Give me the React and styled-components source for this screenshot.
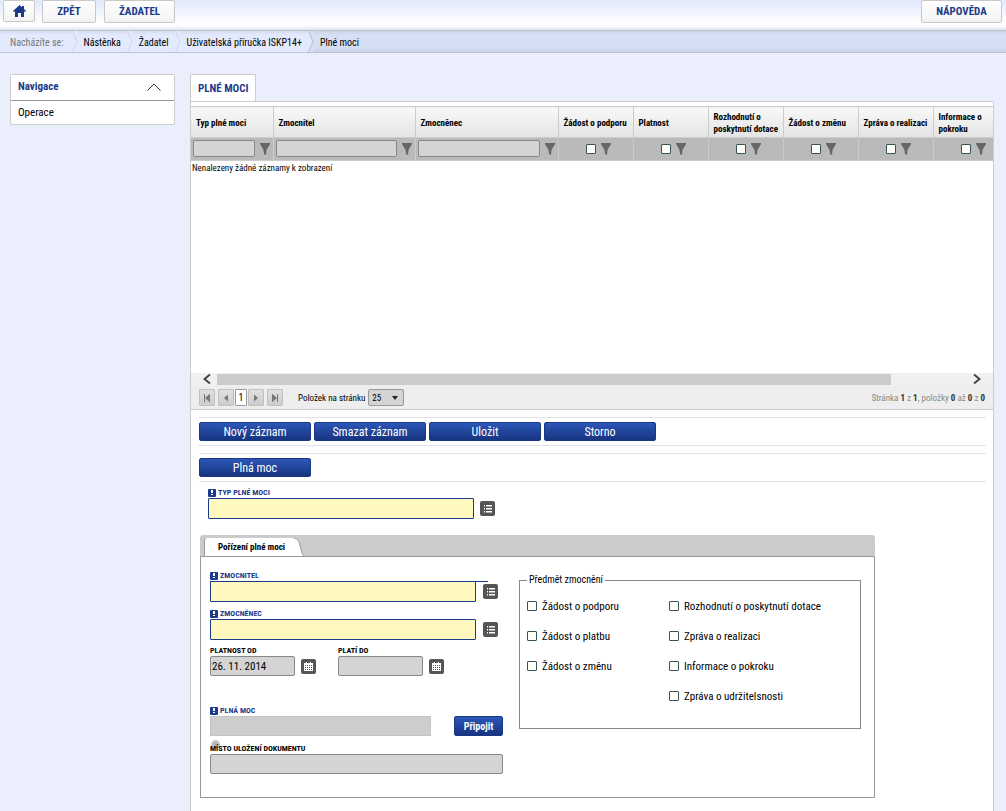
/*
  App.jsx: Plné moci page -- top bar, breadcrumbs, side menu, records grid and detail form
*/

import React, { useState } from 'react'
import styled, { createGlobalStyle } from 'styled-components';

const GlobalStyle = createGlobalStyle`
  *{
    box-sizing: border-box;
  }

  body{
    margin: 0;
    background: #ebeffd;
    color: #000;
    font-family: "Roboto Condensed", "Liberation Sans Narrow", Roboto, sans-serif;
    font-size: 10px;
  }

  button, input, select{
    font-family: inherit;
    margin: 0;
  }

  a{
    color: inherit;
    text-decoration: none;
  }
`;

const Page = styled.div`
  min-height: 100vh;
  display: flex;
  flex-direction: column;
`;

const TopBar = styled.header`
  display: flex;
  align-items: flex-start;
  height: 31px;
  padding: 0 4px 0 3px;
  background: linear-gradient(#e2e9fd, #fff 80%, #f6f8fc 90%, #dde2ec);
  border-bottom: 1px solid #bfc4c8;
`;

const TopButton = styled.button`
  display: flex;
  align-items: center;
  justify-content: center;
  width: ${props => props.$width}px;
  height: ${props => props.$small ? 22 : 23}px;
  margin-right: ${props => props.$gap || 0}px;
  margin-left: ${props => props.$right ? "auto" : "0"};
  padding: 0;
  background: linear-gradient(#fff, #f3f3f3);
  border: 1px solid #c8c8c8;
  border-radius: 2px;
  color: #1b3a8a;
  font-size: 11px;
  font-weight: bold;
`;

const Crumbs = styled.nav`
  display: flex;
  height: 22px;
  background: linear-gradient(#ccd4e8, #d7dff4 4px, #d7dff4 16px, #c9d2e8);
  border-bottom: 1px solid #b9c3db;
  line-height: 23px;
`;

const Crumb = styled.span`
  padding: 0 ${props => props.$first ? 8 : 6}px 0 ${props => props.$first ? 10 : 6}px;
  background: ${props => props.$last ? "transparent" : "linear-gradient(#d3dbee, #e3eafd 4px)"};
  color: ${props => props.$first ? "#777" : "#000"};
`;

const Body = styled.div`
  flex: 1;
  display: flex;
  gap: 15px;
  padding: 21px 12px 0 10px;
`;

const SideMenu = styled.aside`
  flex: none;
  align-self: flex-start;
  width: 165px;
  background: #fff;
  border: 1px solid #ccc;
  border-radius: 2px;
  font-size: 11px;
`;

const SideTitle = styled.button`
  display: flex;
  align-items: center;
  justify-content: space-between;
  width: 100%;
  height: 26px;
  padding: 0 13px 2px 7px;
  background: #fff;
  border: 0;
  border-bottom: 1px solid #999;
  color: #1b3a8a;
  font-size: 11px;
  font-weight: bold;
`;

const SideLink = styled.a`
  display: block;
  padding: 0 7px;
  line-height: 23px;
`;

const Main = styled.main`
  flex: 1;
  min-width: 0;
  display: flex;
  flex-direction: column;
`;

const PageTab = styled.button`
  align-self: flex-start;
  height: 27px;
  padding: 0 7px;
  background: #fff;
  border: 1px solid #ccc;
  border-bottom: 0;
  border-radius: 2px 2px 0 0;
  color: #1b3a8a;
  font-size: 11px;
  font-weight: bold;
`;

const Panel = styled.section`
  flex: 1;
  padding-top: 4px;
  background: #fff;
  border: 1px solid #ccc;
  border-bottom: 0;
  border-radius: 0 2px 0 0;
`;

const GridBox = styled.div`
  height: 267px;
  overflow: hidden;
`;

const Grid = styled.table`
  width: 100%;
  min-width: 817px;
  table-layout: fixed;
  border-collapse: collapse;
  border-spacing: 0;

  th, td{
    padding: 0;
  }
`;

const HeadCell = styled.th`
  width: ${props => props.$width}px;
  height: 31px;
  background: linear-gradient(#f8f8f8, #e4e4e4);
  border: 1px solid #ccc;
  border-left: 0;
  font-size: 9px;
  font-weight: bold;
  line-height: 12px;
  text-align: left;

  span{
    display: block;
    padding: 1px 0 0 5px;
  }
`;

const FilterCell = styled.td`
  height: 23px;
  background: #bababa;
  border: 1px solid #ccc;
  border-left: 0;
`;

const FilterRow = styled.div`
  display: flex;
  align-items: center;
  justify-content: ${props => props.$check ? "flex-start" : "space-between"};
  gap: 5px;
  height: 21px;
  padding: 0 3px 1px ${props => props.$check ? 27 : 2}px;
`;

const FilterInput = styled.input`
  flex: 1;
  min-width: 0;
  height: 17px;
  background: #d4d4d4;
  border: 1px solid #888;
  border-radius: 2px;
`;

const EmptyText = styled.td`
  font-size: 9px;
  line-height: 14px;

  span{
    padding-left: 1px;
  }
`;

const ScrollBar = styled.div`
  display: flex;
  align-items: center;
  height: 13px;
  padding: 0 12px 1px;
  background: #f0f0f0;
`;

const Track = styled.div`
  flex: 1;
  height: 11px;
  margin: 0 7px 0 6px;
`;

const Thumb = styled.div`
  width: 90%;
  height: 11px;
  background: #cbcbcb;
`;

const Pager = styled.div`
  display: flex;
  align-items: center;
  height: 24px;
  padding: 0 8px;
  background: #eee;
  border-bottom: 1px solid #ccc;
  font-size: 9px;
`;

const PageButton = styled.button`
  display: flex;
  align-items: center;
  justify-content: center;
  width: ${props => props.$on ? 12 : 16}px;
  height: 17px;
  margin-right: ${props => props.$gap || 1}px;
  padding: 0;
  background: ${props => props.$on ? "#fff" : "linear-gradient(#e0e0e0, #cdcdcd)"};
  border: 1px solid ${props => props.$on ? "#999" : "#c0c0c0"};
  border-radius: 1px;
  color: #000;
  font-size: 10px;
`;

const PageSize = styled.label`
  display: flex;
  align-items: center;
  gap: 3px;
  margin-left: 14px;
`;

const SizeSelect = styled.div`
  display: grid;
  align-items: center;
  width: 36px;
  height: 17px;
  background: #d4d4d4;
  border: 1px solid #999;
  border-radius: 2px;

  select, svg{
    grid-area: 1 / 1;
  }

  select{
    appearance: none;
    width: 100%;
    padding: 0 0 0 3px;
    background: transparent;
    border: 0;
    color: #000;
    font-size: 9px;
  }

  svg{
    justify-self: end;
    margin-right: 5px;
    pointer-events: none;
  }
`;

const PageInfo = styled.span`
  margin-left: auto;
  color: #888;

  b{
    color: #333;
  }
`;

const ButtonRow = styled.div`
  display: flex;
  gap: 3px;
  margin: 7px 7px 0 8px;
  padding: 4px 0;
  border-top: 1px solid #e2e2e2;
  border-bottom: 1px solid #e2e2e2;
`;

const BlueButton = styled.button`
  width: ${props => props.$width || 112}px;
  height: ${props => props.$width ? 20 : 19}px;
  padding: ${props => props.$width ? 0 : 2}px 0 0;
  background: linear-gradient(#2c56b8, #173480);
  border: 1px solid #1a3784;
  border-radius: 2px;
  color: #fff;
  font-size: ${props => props.$width ? 10 : 12}px;
  line-height: 15px;
  font-weight: ${props => props.$width ? "bold" : "normal"};
`;

const TypeBox = styled.div`
  padding: 6px 17px 16px;
`;

const FieldBox = styled.div`
  margin-top: ${props => props.$top || 0}px;
`;

const FieldLabel = styled.label`
  display: flex;
  align-items: center;
  gap: 2px;
  height: 10px;
  color: ${props => props.$required ? "#1b3a8a" : "#000"};
  font-size: 8px;
  font-weight: bold;
  line-height: 10px;
  white-space: nowrap;
`;

// $line draws the top edge of the row out towards the picker button
const FieldRow = styled.div`
  position: relative;
  display: flex;
  align-items: center;
  gap: ${props => props.$gap || 7}px;

  &::after{
    content: "";
    display: ${props => props.$line ? "block" : "none"};
    position: absolute;
    left: 0;
    top: 0;
    width: 278px;
    height: 1px;
    background: #1b3a8a;
  }
`;

const TextInput = styled.input`
  width: ${props => props.$width}px;
  height: ${props => props.$required ? 21 : 20}px;
  padding: 0 1px;
  background: ${props => props.$required ? "#fff9c0" : props.$file ? "#cdcdcd" : "#d4d4d4"};
  border: 1px solid ${props => props.$required ? "#1b3a8a" : props.$file ? "#c4c4c4" : "#888"};
  border-radius: ${props => props.$required ? 1 : props.$file ? 0 : 2}px;
  font-size: 11px;
`;

const IconButton = styled.button`
  display: flex;
  width: 15px;
  height: 15px;
  padding: 0;
  background: #555;
  border: 0;
  border-radius: 2px;
`;

const TabSet = styled.div`
  max-width: 675px;
  margin-left: 9px;
`;

const TabStrip = styled.div`
  display: flex;
  align-items: flex-end;
  height: 21px;
  padding-left: 4px;
  background: #cbcbcb;
  border-radius: 3px 3px 0 0;
`;

const InnerTab = styled.button`
  display: flex;
  height: 18px;
  padding: 0;
  background: none;
  border: 0;
  font-size: 9px;
  font-weight: bold;
  line-height: 18px;

  span{
    width: 87px;
    padding-left: 13px;
    background: #fff;
    border-left: 1px solid #999;
    border-radius: 3px 0 0 0;
    text-align: left;
    white-space: nowrap;
  }
`;

const TabPanel = styled.div`
  display: flex;
  align-items: flex-start;
  min-height: 242px;
  padding: 14px 13px 23px 9px;
  border: 1px solid #999;
`;

const FormColumn = styled.div`
  flex: none;
  width: 309px;
`;

const FormLine = styled.div`
  display: flex;
  align-items: flex-end;
  gap: ${props => props.$gap}px;
  margin-top: ${props => props.$top}px;
`;

const Spinner = styled.i`
  position: absolute;
  left: 1px;
  top: -4px;
  width: 9px;
  height: 9px;
  border-radius: 5px;
  background: radial-gradient(#aaa, #ddd);
  z-index: -1;
`;

const SpinnerBox = styled.div`
  position: relative;
  z-index: 0;
  margin-top: 8px;
`;

const Subject = styled.fieldset`
  flex: 1;
  min-width: 0;
  margin: 3px 0 0;
  padding: 5px 7px 17px;
  border: 1px solid #888;

  legend{
    padding: 0 2px;
    font-size: 10px;
    line-height: 12px;
  }
`;

const SubjectGrid = styled.div`
  display: grid;
  grid-template-columns: 142px 1fr;
  grid-template-rows: repeat(4, 30px);
  grid-auto-flow: column;
`;

const CheckLabel = styled.label`
  grid-column: ${props => props.$col};
  display: flex;
  align-items: center;
  gap: 5px;
  font-size: 11px;
  white-space: nowrap;
`;

const Check = styled.input`
  appearance: none;
  flex: none;
  width: 10px;
  height: 10px;
  background: #fffff8;
  border: 1px solid #35555a;
  border-radius: 1px;

  &:checked{
    background: #1b3a8a;
  }
`;

const columns = [
  { title: 'Typ plné moci', width: 82 },
  { title: 'Zmocnitel', width: 142 },
  { title: 'Zmocněnec', width: 143 },
  { title: 'Žádost o podporu', width: 75, check: true },
  { title: 'Platnost', width: 75, check: true },
  { title: 'Rozhodnutí o poskytnutí dotace', width: 75, check: true },
  { title: 'Žádost o změnu', width: 75, check: true },
  { title: 'Zpráva o realizaci', width: 75, check: true },
  { title: 'Informace o pokroku', width: 75, check: true }
];

const subjects = [
  { title: 'Žádost o podporu', col: 1 },
  { title: 'Žádost o platbu', col: 1 },
  { title: 'Žádost o změnu', col: 1 },
  { title: 'Rozhodnutí o poskytnutí dotace', col: 2 },
  { title: 'Zpráva o realizaci', col: 2 },
  { title: 'Informace o pokroku', col: 2 },
  { title: 'Zpráva o udržitelsnosti', col: 2 }
];

const HomeIcon = () => (
  <svg width="13" height="12" viewBox="0 0 13 12">
    <path d="M6.5 0 L0 6 L0.8 7 L2 6.2 V12 H5 V8 H8 V12 H11 V6.2 L12.2 7 L13 6 L11 4 V1 H9 V2.2 Z" fill="#1b3a8a" />
  </svg>
);

const CrumbArrow = ({ last }) => (
  <svg width="6" height="21" viewBox="0 0 6 21" preserveAspectRatio="none">
    <rect width="6" height="21" fill={last ? '#d7dff4' : '#e3eafd'} />
    <path d="M0 0 L5 10.5 L0 21 Z" fill="#e3eafd" />
    <path d="M0.5 0 L5 10.5 L0.5 21" fill="none" stroke={last ? '#b4bdd4' : '#cdd4e6'} />
  </svg>
);

const Funnel = () => (
  <svg width="10" height="12" viewBox="0 0 10 12">
    <path d="M0 0 H10 V1 L6.5 7 L6 12 L4 11 L3.5 7 L0 1 Z" fill="#666" />
  </svg>
);

const ScrollArrow = ({ right }) => (
  <svg width="8" height="10" viewBox="0 0 8 10">
    <path d={right ? 'M1 0.5 L6.5 5 L1 9.5' : 'M7 0.5 L1.5 5 L7 9.5'} fill="none" stroke="#444" strokeWidth="2" />
  </svg>
);

const PageArrow = ({ right, end }) => (
  <svg width="8" height="8" viewBox="0 0 8 8">
    <g transform={right ? 'rotate(180 4 4)' : undefined}>
      {end && <rect x="1" y="0" width="1" height="8" fill="#777" />}
      <path d="M6 0.5 V7.5 L2 4 Z" fill="#777" />
      {end && <rect x="6" y="0" width="1" height="8" fill="#777" />}
    </g>
  </svg>
);

const Required = () => (
  <svg width="8" height="8" viewBox="0 0 8 8">
    <rect width="8" height="8" rx="1" fill="#1b3a8a" />
    <rect x="3" y="1" width="2" height="3" fill="#fff" />
    <rect x="3" y="5" width="2" height="1" fill="#fff" />
  </svg>
);

const ListIcon = () => (
  <svg width="15" height="15" viewBox="0 0 15 15">
    <path d="M4 4h1v1.5H4z M4 7h1v1.5H4z M4 10h1v1.5H4z M6 4h6v1.5H6z M6 7h6v1.5H6z M6 10h6v1.5H6z" fill="#fff" />
  </svg>
);

const CalendarIcon = () => (
  <svg width="15" height="15" viewBox="0 0 15 15">
    <path d="M3 4h9v8H3z M5 3h1v1H5z M9 3h1v1H9z" fill="#fff" />
    <path d="M4 6h1v1H4z M6 6h1v1H6z M8 6h1v1H8z M10 6h1v1h-1z M4 8h1v1H4z M6 8h1v1H6z M8 8h1v1H8z M10 8h1v1h-1z M4 10h1v1H4z M6 10h1v1H6z M8 10h1v1H8z M10 10h1v1h-1z" fill="#555" />
  </svg>
);

const Field = ({ id, label, required, file, width, top, gap, line, value, icon, iconLabel }) => (
  <FieldBox $top={top}>
    <FieldLabel htmlFor={id} $required={required || file}>
      {(required || file) && <Required />}
      {label}
    </FieldLabel>
    <FieldRow $gap={gap} $line={line}>
      <TextInput id={id} type="text" $width={width} $required={required} $file={file} defaultValue={value} />
      {icon && <IconButton type="button" aria-label={iconLabel}>{icon}</IconButton>}
    </FieldRow>
  </FieldBox>
);

export default function App() {
  const [open, setOpen] = useState(true);

  return (
    <Page>
      <GlobalStyle />
      <TopBar>
        <TopButton $width={32} $small $gap={7} aria-label="Domů"><HomeIcon /></TopButton>
        <TopButton $width={54} $gap={8}>ZPĚT</TopButton>
        <TopButton $width={71}>ŽADATEL</TopButton>
        <TopButton $width={81} $right>NÁPOVĚDA</TopButton>
      </TopBar>

      <Crumbs>
        <Crumb $first>Nacházíte se:</Crumb>
        <CrumbArrow />
        <Crumb><a href="#nastenka">Nástěnka</a></Crumb>
        <CrumbArrow />
        <Crumb><a href="#zadatel">Žadatel</a></Crumb>
        <CrumbArrow />
        <Crumb><a href="#prirucka">Uživatelská příručka ISKP14+</a></Crumb>
        <CrumbArrow last />
        <Crumb $last>Plné moci</Crumb>
      </Crumbs>

      <Body>
        <SideMenu>
          <SideTitle onClick={() => setOpen(!open)}>
            Navigace
            <svg width="14" height="8" viewBox="0 0 14 8">
              <path d={open ? 'M0.5 7.5 L7 1 L13.5 7.5' : 'M0.5 0.5 L7 7 L13.5 0.5'} fill="none" stroke="#333" />
            </svg>
          </SideTitle>
          {open && <SideLink href="#operace">Operace</SideLink>}
        </SideMenu>

        <Main>
          <PageTab>PLNÉ MOCI</PageTab>
          <Panel>
            <GridBox>
              <Grid>
                <thead>
                  <tr>
                    {columns.map(c => (
                      <HeadCell key={c.title} $width={c.width}><span>{c.title}</span></HeadCell>
                    ))}
                  </tr>
                </thead>
                <tbody>
                  <tr>
                    {columns.map(c => (
                      <FilterCell key={c.title}>
                        <FilterRow $check={c.check}>
                          {c.check
                            ? <Check type="checkbox" aria-label={c.title} />
                            : <FilterInput type="text" aria-label={c.title} />}
                          <Funnel />
                        </FilterRow>
                      </FilterCell>
                    ))}
                  </tr>
                  <tr>
                    <EmptyText colSpan={columns.length}><span>Nenalezeny žádné záznamy k zobrazení</span></EmptyText>
                  </tr>
                </tbody>
              </Grid>
            </GridBox>
            <ScrollBar>
              <ScrollArrow />
              <Track><Thumb /></Track>
              <ScrollArrow right />
            </ScrollBar>
            <Pager>
              <PageButton $gap={3} aria-label="První"><PageArrow end /></PageButton>
              <PageButton aria-label="Předchozí"><PageArrow /></PageButton>
              <PageButton $on>1</PageButton>
              <PageButton $gap={3} aria-label="Další"><PageArrow right /></PageButton>
              <PageButton aria-label="Poslední"><PageArrow right end /></PageButton>
              <PageSize>
                Položek na stránku
                <SizeSelect>
                  <select defaultValue="25">
                    <option>25</option>
                    <option>50</option>
                  </select>
                  <svg width="6" height="4" viewBox="0 0 6 4"><path d="M0 0 H6 L3 4 Z" fill="#222" /></svg>
                </SizeSelect>
              </PageSize>
              <PageInfo>Stránka <b>1</b> z <b>1</b>, položky <b>0</b> až <b>0</b> z <b>0</b></PageInfo>
            </Pager>

            <ButtonRow>
              <BlueButton>Nový záznam</BlueButton>
              <BlueButton>Smazat záznam</BlueButton>
              <BlueButton>Uložit</BlueButton>
              <BlueButton>Storno</BlueButton>
            </ButtonRow>
            <ButtonRow>
              <BlueButton>Plná moc</BlueButton>
            </ButtonRow>

            <TypeBox>
              <Field id="typ" label="TYP PLNÉ MOCI" required width={266} gap={6} icon={<ListIcon />} iconLabel="Vybrat typ" />
            </TypeBox>

            <TabSet>
              <TabStrip>
                <InnerTab>
                  <span>Pořízení plné moci</span>
                  <svg width="13" height="18" viewBox="0 0 13 18">
                    <path d="M0 0 H3 C8 0 8 5 9.5 9 C10.5 13 11 16 13 18 H0 Z" fill="#fff" />
                    <path d="M3 0.5 C8 0.5 8 5 9.5 9 C10.5 13 11 16 12.5 18" fill="none" stroke="#999" />
                  </svg>
                </InnerTab>
              </TabStrip>
              <TabPanel>
                <FormColumn>
                  <Field id="zmocnitel" label="ZMOCNITEL" required line width={266} icon={<ListIcon />} iconLabel="Vybrat zmocnitele" />
                  <Field id="zmocnenec" label="ZMOCNĚNEC" required width={266} top={7} icon={<ListIcon />} iconLabel="Vybrat zmocněnce" />
                  <FormLine $gap={22} $top={6}>
                    <Field id="od" label="PLATNOST OD" width={85} gap={6} value="26. 11. 2014" icon={<CalendarIcon />} iconLabel="Kalendář" />
                    <Field id="do" label="PLATÍ DO" width={85} gap={6} icon={<CalendarIcon />} iconLabel="Kalendář" />
                  </FormLine>
                  <FormLine $gap={23} $top={30}>
                    <Field id="moc" label="PLNÁ MOC" file width={221} />
                    <BlueButton $width={49}>Připojit</BlueButton>
                  </FormLine>
                  <SpinnerBox>
                    <Spinner />
                    <Field id="misto" label="MÍSTO ULOŽENÍ DOKUMENTU" width={293} />
                  </SpinnerBox>
                </FormColumn>
                <Subject>
                  <legend>Předmět zmocnění</legend>
                  <SubjectGrid>
                    {subjects.map(s => (
                      <CheckLabel key={s.title} $col={s.col}>
                        <Check type="checkbox" />
                        {s.title}
                      </CheckLabel>
                    ))}
                  </SubjectGrid>
                </Subject>
              </TabPanel>
            </TabSet>
          </Panel>
        </Main>
      </Body>
    </Page>
  );
}
